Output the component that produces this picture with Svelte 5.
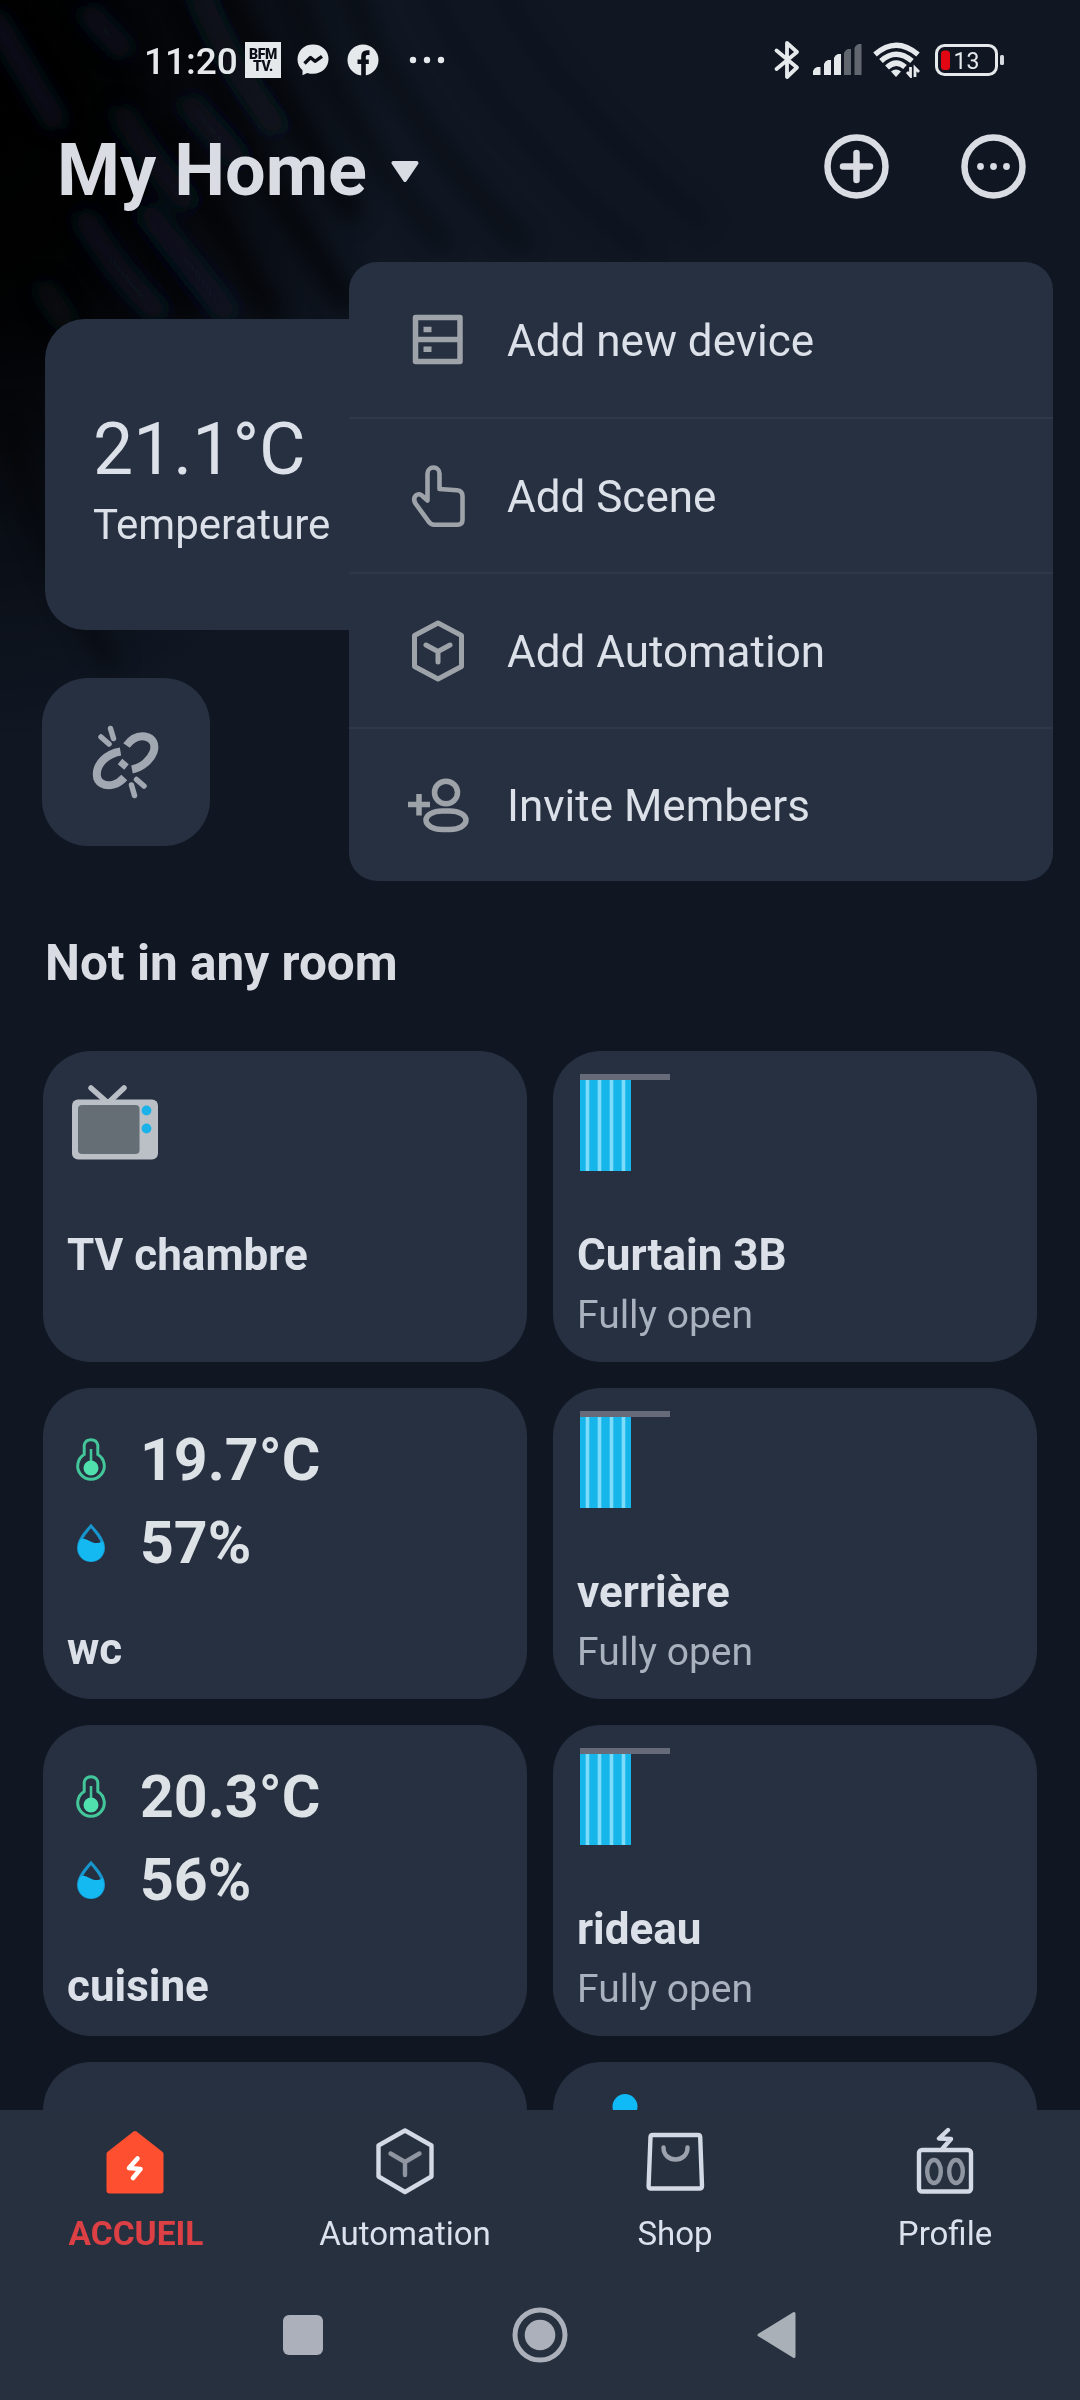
<script>
    let menuOpen = true;
    let activeTab = "home";

    const menuItems = [
        { icon: "device", label: "Add new device" },
        { icon: "scene", label: "Add Scene" },
        { icon: "automation", label: "Add Automation" },
        { icon: "invite", label: "Invite Members" }
    ];

    const devices = [
        { type: "tv", name: "TV chambre" },
        { type: "curtain", name: "Curtain 3B", state: "Fully open" },
        { type: "sensor", name: "wc", temp: "19.7°C", humidity: "57%" },
        { type: "curtain", name: "verrière", state: "Fully open" },
        { type: "sensor", name: "cuisine", temp: "20.3°C", humidity: "56%" },
        { type: "curtain", name: "rideau", state: "Fully open" },
        { type: "empty", name: "" },
        { type: "lamp", name: "" }
    ];

    const tabs = [
        { id: "home", label: "ACCUEIL" },
        { id: "automation", label: "Automation" },
        { id: "shop", label: "Shop" },
        { id: "profile", label: "Profile" }
    ];
</script>

<div class="screen">
    <!-- palm leaf shadow in the top left corner -->
    <svg class="backdrop" width="1080" height="900" viewBox="0 0 1080 900">
        <defs>
            <radialGradient id="corner" cx="0" cy="0" r="1" gradientTransform="translate(0 130) scale(400 620)" gradientUnits="userSpaceOnUse">
                <stop offset="0" stop-color="#000" />
                <stop offset="0.3" stop-color="#000" stop-opacity="0.92" />
                <stop offset="0.65" stop-color="#000" stop-opacity="0.4" />
                <stop offset="1" stop-color="#000" stop-opacity="0" />
            </radialGradient>
            <filter id="soft" x="-20%" y="-20%" width="140%" height="140%">
                <feGaussianBlur stdDeviation="10" />
            </filter>
        </defs>
        <rect width="1080" height="900" fill="url(#corner)" />
        <g fill="none" stroke-linecap="round" filter="url(#soft)">
            <g stroke="#000" stroke-width="24">
                <path opacity="0.6" d="M110 150Q140 230 190 310M170 130Q210 210 270 310" />
                <path opacity="0.55" d="M170 -10Q220 110 345 300M225 -10Q270 80 350 210" />
                <path opacity="0.3" d="M290 -10Q330 110 440 240M350 -10Q400 120 520 240" />
                <path opacity="0.14" d="M430 -10Q480 110 640 250M500 -10Q560 100 700 220" />
                <path opacity="0.3" d="M10 420Q30 540 110 660" />
            </g>
            <g stroke="#172131" stroke-width="20">
                <path opacity="0.65" d="M-5 20Q25 70 55 120M90 15L122 48" />
                <path opacity="0.5" d="M122 115Q150 160 185 200M190 105L235 155" />
                <path opacity="0.6" d="M85 220Q115 270 155 310M150 215Q190 265 225 310" />
                <path opacity="0.4" d="M200 -5Q225 60 275 125M45 290L65 320" />
            </g>
        </g>
    </svg>

    <main class="content">
        <div class="status">
            <span class="time">11:20</span>
            <span class="bfm"><span>BFM</span><span>TV.</span></span>
            <svg class="messenger" width="32" height="32" viewBox="0 0 32 32">
                <path fill="#e6e9ec" d="M16 .5C7 .5.5 6.800.5 15.300c0 4.600 1.900 8.400 5 11v4.900l4.700-2.300c1.800.6 3.700.9 5.800.9 9 0 15.500-6.300 15.500-14.700S25 .5 16 .5z" />
                <path fill="none" stroke="#0a0e16" stroke-width="3.400" stroke-linejoin="round" d="M7.500 19.500l6-6 4.500 3.800 7-5" />
            </svg>
            <svg class="facebook" width="32" height="32" viewBox="0 0 32 32">
                <circle cx="16" cy="16" r="15.500" fill="#e6e9ec" />
                <path fill="none" stroke="#0a0e16" stroke-width="4.600" d="M22.500 8.600h-2.300c-2.500 0-3.700 1.300-3.700 3.800V32M10.500 17.800h11.300" />
            </svg>
            <svg class="more" width="36" height="8" viewBox="0 0 36 8">
                <circle cx="4" cy="4" r="3.200" /><circle cx="18" cy="4" r="3.200" /><circle cx="32" cy="4" r="3.200" />
            </svg>

            <div class="status-right">
                <svg width="28" height="40" viewBox="0 0 28 40" fill="none" stroke="#e6e9ec" stroke-width="3.800" stroke-linejoin="round" stroke-linecap="round">
                    <path d="M3.500 10.500L24 27.500 14 37V3L24 12 3.500 29" />
                </svg>
                <svg class="signal" width="50" height="32" viewBox="0 0 50 32" fill="#e6e9ec">
                    <path d="M0 31v-4q1-3 4-4h3.500v8zM11 31V20q1-3 4-4h3v15zM21 31V14q1-3 4-4h3v21z" />
                    <path fill="#62666f" d="M31 31V9q1-3 4-4h3v26zM41.500 31V4q1-3 4-4h3v31z" />
                </svg>
                <svg class="wifi" width="48" height="36" viewBox="0 0 48 36">
                    <g fill="none" stroke="#e6e9ec" stroke-width="5.400">
                        <path d="M2 12.500Q23 -6 45 12.500M8 19Q23 5.500 39 19M14 25.500Q23 17 32 25" />
                    </g>
                    <path fill="#e6e9ec" d="M18 29.500q5-4 10 0l-5 5.500z" />
                    <path fill="none" stroke="#e6e9ec" stroke-width="2.800" d="M37.500 25v9l-3.500-4M42 35v-9l4 4" />
                </svg>
                <svg class="battery" width="70" height="32" viewBox="0 0 70 32">
                    <rect x="1.500" y="1.500" width="60" height="29" rx="8" fill="none" stroke="#e6e9ec" stroke-width="3" />
                    <rect x="6" y="6.500" width="9" height="19.500" rx="3.500" fill="#e20612" />
                    <rect x="65" y="11" width="4" height="10" rx="1.500" fill="#d5d8dc" />
                    <text x="31.500" y="24.500" text-anchor="middle" font-size="23" fill="#e6e9ec">13</text>
                </svg>
            </div>
        </div>

        <header>
            <h1>My Home</h1>
            <svg class="caret" width="28" height="21" viewBox="0 0 28 21">
                <path d="M2.500 2h23L14 19z" fill="#d9dce3" stroke="#d9dce3" stroke-width="4" stroke-linejoin="round" />
            </svg>
            <button class="round" aria-label="Add" on:click={() => (menuOpen = !menuOpen)}>
                <svg width="65" height="65" viewBox="0 0 65 65" fill="none" stroke="#d9dce3">
                    <circle cx="32.500" cy="32.500" r="29" stroke-width="6.500" />
                    <path d="M19 32.500h27M32.500 19v27" stroke-width="6.500" stroke-linecap="round" />
                </svg>
            </button>
            <button class="round" aria-label="More">
                <svg width="65" height="65" viewBox="0 0 65 65" fill="#d9dce3">
                    <circle cx="32.500" cy="32.500" r="29" stroke-width="6.500" fill="none" stroke="#d9dce3" />
                    <circle cx="19.500" cy="32.500" r="3.400" /><circle cx="32.500" cy="32.500" r="3.400" /><circle cx="45.500" cy="32.500" r="3.400" />
                </svg>
            </button>
        </header>

        <section class="climate">
            <div class="value">21.1°C</div>
            <div class="caption">Temperature</div>
        </section>

        <button class="link-tile" aria-label="Unlinked devices">
            <svg width="68" height="74" viewBox="0 0 68 74" fill="none" stroke="#a2a8b1">
                <path stroke-width="8" d="M28.500 26.500C14 29 5 39 4.800 49c-.2 9 8 13 17 10.500 4-1.100 7.500-3.700 10.500-7" />
                <path stroke-width="8" d="M34.500 20.500C40 13 46 10.500 53 11.500c8 1.300 11 8 8.500 15.500C58.500 35 50 42.500 40 44.500" />
                <path stroke-width="7" d="M28 36.500l6.500 5.500" />
                <path stroke-width="5.500" stroke-linecap="round" d="M18.500 3.500l3 10M9 12l8 7M44.500 54.500l7.500 6.500M39.500 60l3 10.500" />
            </svg>
        </button>

        <h2>Not in any room</h2>

        <div class="grid">
            {#each devices as device}
                <article class="card">
                    {#if device.type === "sensor"}
                        <div class="readings">
                            <div class="reading">
                                <svg width="32" height="50" viewBox="0 0 32 50" fill="none" stroke="#42c69a" stroke-width="3">
                                    <path d="M9.200 10a7 7 0 0 1 13.600 0v9.500a13.300 13.300 0 1 1-13.600 0z" />
                                    <path d="M16 14v16" stroke-width="2.600" />
                                    <circle cx="16" cy="33" r="7.500" fill="#4fe0ae" stroke="none" />
                                </svg>
                                <span>{device.temp}</span>
                            </div>
                            <div class="reading">
                                <svg width="32" height="50" viewBox="0 0 32 50">
                                    <path d="M16 8c5 6 12.500 13.500 12.500 22a12.500 12.500 0 0 1-25 0C3.500 21.500 11 14 16 8z" fill="none" stroke="#1795cc" stroke-width="3" />
                                    <path d="M3 29c.4-4 1.500-6 3-8 6-2 10 5 17 4 2-.3 3.600-1 5-1.500 1.500 5 1.500 9-.5 13a13 13 0 0 1-23 0C3.500 34.500 3 32 3 29z" fill="#14b9f2" />
                                </svg>
                                <span>{device.humidity}</span>
                            </div>
                        </div>
                    {:else}
                        <div class="picture">
                            {#if device.type === "tv"}
                                <svg class="tv" width="86" height="75" viewBox="0 0 86 75">
                                    <path d="M19 3l17 15L52 3" fill="none" stroke="#b9bdc5" stroke-width="5.500" stroke-linecap="round" />
                                    <rect y="14.500" width="86" height="60" rx="6" fill="#bbc0c6" />
                                    <rect x="6" y="20" width="61.500" height="49" rx="4" fill="#656d75" />
                                    <circle cx="74.500" cy="25.500" r="4.900" fill="#1bb1e9" />
                                    <circle cx="74.500" cy="43.500" r="4.900" fill="#1bb1e9" />
                                </svg>
                            {:else if device.type === "curtain"}
                                <svg class="curtain" width="90" height="97" viewBox="0 0 90 97">
                                    <rect y="6" width="51" height="91" fill="#17b6ea" />
                                    <path d="M7.500 6v91M19.500 6v91M31.500 6v91M43.500 6v91" stroke="#7cdcfa" stroke-width="3.600" />
                                    <rect width="90" height="6" fill="#676a79" />
                                </svg>
                            {:else if device.type === "lamp"}
                                <svg class="lamp" width="90" height="60" viewBox="0 0 90 60">
                                    <circle cx="45" cy="12.500" r="12.500" fill="#0fbaf6" />
                                </svg>
                            {/if}
                        </div>
                    {/if}
                    <div class="name">{device.name}</div>
                    {#if device.state}
                        <div class="state">{device.state}</div>
                    {/if}
                </article>
            {/each}
        </div>
    </main>

    <nav class="tabs">
        {#each tabs as tab}
            <button class="tab" class:active={activeTab === tab.id} on:click={() => (activeTab = tab.id)}>
                <svg width="68" height="68" viewBox="0 0 68 68" fill="none" stroke="#d3d9e5" stroke-width="4.400" stroke-linejoin="round" stroke-linecap="round">
                    {#if tab.id === "home"}
                        <path d="M34 7L8.500 27v36.500h51V27z" fill="#fe5030" stroke="#fe5030" stroke-width="6" />
                        <path d="M36.500 31.500L28 41l11.500 1L32 51" stroke="#fff" stroke-width="4.600" />
                    {:else if tab.id === "automation"}
                        <path d="M34 3.500L60.500 18.500v31L34 65 7.500 49.500v-31z" />
                        <path d="M19.500 26.500L34 35l14.500-8.500M34 35v13" stroke="#8f96a1" />
                    {:else if tab.id === "shop"}
                        <path d="M11.500 8h45.500q2 0 2.200 2L61 59q0 2.500-2.500 2.500H10q-2.500 0-2.400-2.500L9.500 10q.2-2 2-2z" />
                        <path d="M22.500 20.500c0 16 24 16 24 0" stroke="#9da3ae" />
                    {:else}
                        <rect x="8" y="23" width="52" height="41.500" rx="3" />
                        <ellipse cx="23" cy="44.500" rx="6.800" ry="11.500" stroke="#8f96a1" />
                        <ellipse cx="45" cy="44.500" rx="6.800" ry="11.500" stroke="#8f96a1" />
                        <path d="M37 3l-9 8.500 12 .5-8 9" />
                    {/if}
                </svg>
                <span>{tab.label}</span>
            </button>
        {/each}
    </nav>

    <div class="system">
        <svg width="56" height="56" viewBox="0 0 56 56"><rect x="8" y="8" width="40" height="40" rx="6" fill="#abb0ba" /></svg>
        <svg width="56" height="56" viewBox="0 0 56 56">
            <circle cx="28" cy="28" r="25" fill="none" stroke="#abb0ba" stroke-width="5" />
            <circle cx="28" cy="28" r="15.300" fill="#abb0ba" />
        </svg>
        <svg width="56" height="56" viewBox="0 0 56 56"><path d="M10 28L45 6.500v43z" fill="#a9b0b7" stroke="#a9b0b7" stroke-width="3" stroke-linejoin="round" /></svg>
    </div>

    {#if menuOpen}
        <div class="menu">
            {#each menuItems as item}
                <button class="menu-item">
                    <svg width="64" height="64" viewBox="0 0 64 64" fill="none" stroke="#9ea3a9" stroke-width="5.500" stroke-linejoin="round">
                        {#if item.icon === "device"}
                            <path d="M9.500 9.500h44.500v44H9.500zM9.500 31.500h44.500" />
                            <path d="M17.500 21.500h8M17.500 41.300h8" />
                        {:else if item.icon === "scene"}
                            <path stroke-width="4.600" d="M21.500 32V9.500a6 6 0 0 1 12 0v15.500l17.500 1.200q5.500.5 5.500 6v23.500q0 5-5 5H28.500q-4 0-6.500-4L9.500 39.500c-4-7 3-12.500 7.500-7l4.500 4z" />
                        {:else if item.icon === "automation"}
                            <path stroke-width="5" d="M32 4L55.500 16.500v31L32 60 8.500 47.500v-31z" />
                            <path stroke-width="5" stroke-linecap="round" d="M20 26l12 6.500L44 26M32 32.500V43" />
                        {:else}
                            <path d="M2 31.500h22M13 21v21.500" />
                            <ellipse cx="40" cy="19.500" rx="11.500" ry="11.200" />
                            <rect x="20" y="38" width="40" height="18.500" rx="16" ry="9.200" />
                        {/if}
                    </svg>
                    <span>{item.label}</span>
                </button>
            {/each}
        </div>
    {/if}
</div>

<style>
    :global(body) {
        margin: 0;
        background: #101723;
    }

    .screen {
        position: relative;
        width: 1080px;
        height: 2400px;
        overflow: hidden;
        display: flex;
        flex-direction: column;
        background: #101723;
        color: #dce1e9;
        font-family: Roboto, "Noto Sans", sans-serif;
    }

    .backdrop {
        position: absolute;
        top: 0;
        left: 0;
    }

    .content {
        position: relative;
        height: 2110px;
        flex: none;
        overflow: hidden;
    }

    button {
        border: 0;
        padding: 0;
        background: none;
        color: inherit;
        font: inherit;
    }

    svg {
        display: block;
        flex: none;
    }

    .status {
        display: flex;
        align-items: center;
        height: 120px;
        padding: 0 75px 0 144px;
    }

    .time {
        width: 101px;
        font-size: 37px;
        font-weight: 500;
        line-height: 40px;
        padding-top: 3px;
        color: #e6e9ec;
        white-space: nowrap;
    }

    .bfm {
        display: flex;
        flex-direction: column;
        align-items: center;
        justify-content: center;
        width: 36px;
        height: 36px;
        background: #e6e9ec;
        color: #0a0e16;
        font-size: 14px;
        font-weight: 900;
        line-height: 12px;
        letter-spacing: -0.3px;
    }

    .messenger {
        margin-left: 16px;
    }

    .facebook {
        margin-left: 18px;
    }

    .more {
        margin-left: 30px;
        fill: #e6e9ec;
    }

    .status-right {
        display: flex;
        align-items: center;
        margin-left: auto;
    }

    .signal {
        margin-left: 12px;
    }

    .wifi {
        margin-left: 10px;
    }

    .battery {
        margin-left: 14px;
    }

    header {
        display: flex;
        align-items: center;
        height: 93px;
        padding: 0 54px 0 57px;
    }

    h1 {
        margin: 0;
        padding-top: 8px;
        font-size: 72px;
        line-height: 80px;
        color: #d9dce3;
    }

    .caret {
        margin: 10px auto 0 24px;
    }

    .round + .round {
        margin-left: 72px;
    }

    .climate {
        margin: 106px 45px 0;
        height: 311px;
        box-sizing: border-box;
        padding: 95px 48px 0;
        border-radius: 40px;
        background: #263040;
    }

    .value {
        font-size: 71.500px;
        line-height: 72px;
    }

    .caption {
        margin-top: 14px;
        font-size: 42px;
        line-height: 50px;
    }

    .link-tile {
        display: flex;
        align-items: center;
        justify-content: center;
        width: 168px;
        height: 168px;
        margin: 48px 0 0 42px;
        border-radius: 46px;
        background: #263040;
    }

    h2 {
        margin: 87px 0 58px 45px;
        font-size: 49.500px;
        line-height: 60px;
        color: #d9dce3;
    }

    .grid {
        display: grid;
        grid-template-columns: 484px 484px;
        grid-auto-rows: 311px;
        gap: 26px;
        margin-left: 43px;
    }

    .card {
        padding-left: 24px;
        border-radius: 48px;
        background: #263040;
    }

    .picture {
        height: 179px;
        overflow: hidden;
    }

    .tv {
        margin: 34px 0 0 5px;
    }

    .curtain {
        margin: 23px 0 0 3px;
    }

    .lamp {
        margin: 32px 0 0 3px;
    }

    .readings {
        height: 206px;
        padding-top: 30px;
    }

    .reading {
        display: flex;
        align-items: center;
        height: 83px;
        padding-left: 8px;
        font-size: 59px;
        font-weight: 700;
        color: #dde2e6;
    }

    .reading span {
        margin-left: 33px;
    }

    .name {
        font-size: 44px;
        font-weight: 700;
        line-height: 50px;
    }

    .state {
        margin-top: 10px;
        font-size: 39px;
        line-height: 50px;
        color: #a9b1bf;
    }

    .tabs {
        position: relative;
        display: flex;
        height: 160px;
        flex: none;
        background: #26303f;
    }

    .tab {
        width: 270px;
        display: flex;
        flex-direction: column;
        align-items: center;
        padding-top: 17px;
        color: #dce1ee;
    }

    .tab span {
        margin-top: 19px;
        font-size: 33px;
        line-height: 40px;
    }

    .tab.active {
        color: #dd4044;
        font-weight: 700;
    }

    .tab.active span {
        padding-left: 2px;
        font-size: 33.500px;
    }

    .system {
        position: relative;
        display: flex;
        flex: 1;
        align-items: center;
        justify-content: center;
        gap: 181px;
        background: #26303f;
    }

    .menu {
        position: absolute;
        top: 262px;
        left: 349px;
        width: 704px;
        height: 619px;
        display: flex;
        flex-direction: column;
        border-radius: 28px;
        background: #263040;
    }

    .menu-item {
        height: 155px;
        box-sizing: border-box;
        display: flex;
        align-items: center;
        padding-left: 57px;
        font-size: 44px;
        text-align: left;
    }

    .menu-item:first-child {
        height: 157px;
    }

    .menu-item:last-child {
        height: 152px;
    }

    .menu-item:not(:last-child) {
        border-bottom: 2px solid #2d3848;
    }

    .menu-item span {
        margin-left: 37px;
        padding-top: 2px;
    }
</style>
